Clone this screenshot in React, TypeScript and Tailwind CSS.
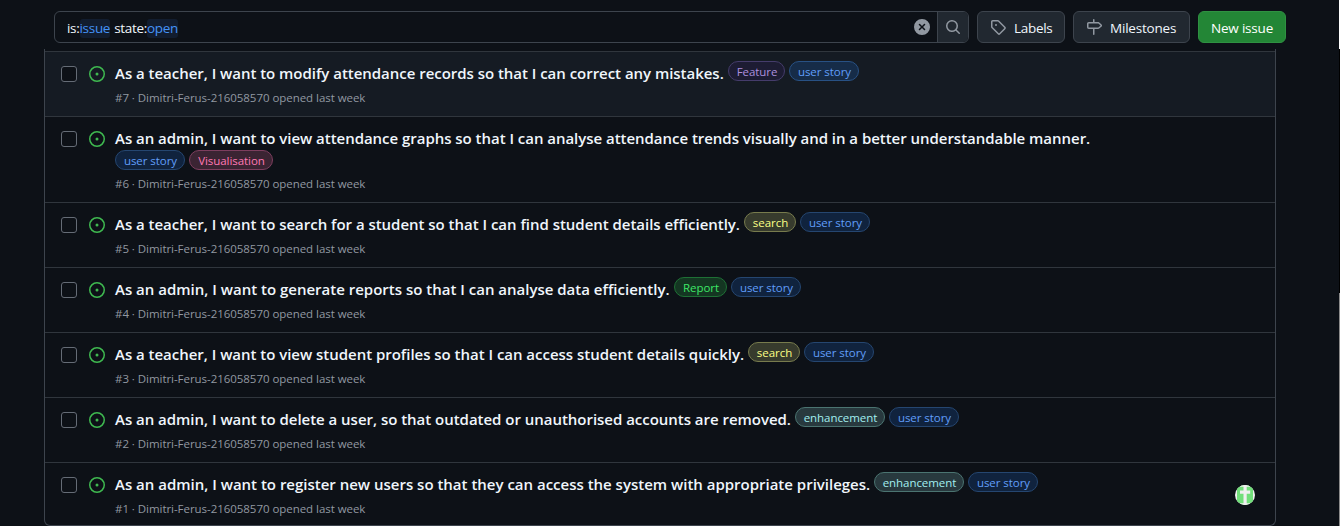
import React from "react";

type Label = { text: string; cls: string };

type Issue = {
  id: number;
  title: string;
  titleCls: string;
  labels: Label[];
  hovered?: boolean;
  wrapped?: boolean;
};

const userStory: Label = { text: "user story", cls: "w-[70px] bg-[#10233e] border-[#254670] text-[#609efa]" };
const search: Label = { text: "search", cls: "w-[52px] bg-[#373b2d] border-[#777b4d] text-[#fbff85]" };
const enhancement: Label = { text: "enhancement", cls: "w-[90px] bg-[#28393e] border-[#4b7471] text-[#a2eeef]" };

const issues: Issue[] = [
  {
    id: 7,
    title: "As a teacher, I want to modify attendance records so that I can correct any mistakes.",
    titleCls: "w-[609px] tracking-[-0.03px]",
    labels: [
      { text: "Feature", cls: "w-[57px] bg-[#1d1c33] border-[#453c6b] text-[#ac8fde]" },
      { text: "user story", cls: "w-[70px] bg-[#162c48] border-[#285184] text-[#609efa]" },
    ],
    hovered: true,
  },
  {
    id: 6,
    title:
      "As an admin, I want to view attendance graphs so that I can analyse attendance trends visually and in a better understandable manner.",
    titleCls: "w-[976px] tracking-[-0.033px]",
    labels: [userStory, { text: "Visualisation", cls: "w-[84px] bg-[#3b2433] border-[#7d3e5e] text-[#ff79b4]" }],
    wrapped: true,
  },
  {
    id: 5,
    title: "As a teacher, I want to search for a student so that I can find student details efficiently.",
    titleCls: "w-[625px] tracking-[-0.025px]",
    labels: [search, userStory],
  },
  {
    id: 4,
    title: "As an admin, I want to generate reports so that I can analyse data efficiently.",
    titleCls: "w-[555px] tracking-[-0.002px]",
    labels: [{ text: "Report", cls: "w-[53px] bg-[#143622] border-[#1e7035] text-[#3ee667]" }, userStory],
  },
  {
    id: 3,
    title: "As a teacher, I want to view student profiles so that I can access student details quickly.",
    titleCls: "w-[629px] tracking-[-0.025px]",
    labels: [search, userStory],
  },
  {
    id: 2,
    title: "As an admin, I want to delete a user, so that outdated or unauthorised accounts are removed.",
    titleCls: "w-[676px] tracking-[-0.025px]",
    labels: [enhancement, userStory],
  },
  {
    id: 1,
    title: "As an admin, I want to register new users so that they can access the system with appropriate privileges.",
    titleCls: "w-[755px] tracking-[-0.006px]",
    labels: [enhancement, userStory],
  },
];

const paths = {
  open: "M8 9.5a1.5 1.5 0 1 0 0-3 1.5 1.5 0 0 0 0 3ZM8 0a8 8 0 1 1 0 16A8 8 0 0 1 8 0ZM1.5 8a6.5 6.5 0 1 0 13 0 6.5 6.5 0 0 0-13 0Z",
  search:
    "M10.68 11.74a6 6 0 0 1-7.922-8.982 6 6 0 0 1 8.982 7.922l3.04 3.04a.749.749 0 0 1-.326 1.275.749.749 0 0 1-.734-.215ZM11.5 7a4.499 4.499 0 1 0-8.997 0A4.499 4.499 0 0 0 11.5 7Z",
  tag: "M1 7.775V2.75C1 1.784 1.784 1 2.75 1h5.025c.464 0 .91.184 1.238.513l6.25 6.25a1.75 1.75 0 0 1 0 2.474l-5.026 5.026a1.75 1.75 0 0 1-2.474 0l-6.25-6.25A1.752 1.752 0 0 1 1 7.775Zm1.5 0c0 .066.026.13.073.177l6.25 6.25a.25.25 0 0 0 .354 0l5.025-5.025a.25.25 0 0 0 0-.354l-6.25-6.25a.25.25 0 0 0-.177-.073H2.75a.25.25 0 0 0-.25.25ZM6 5a1 1 0 1 1 0 2 1 1 0 0 1 0-2Z",
  milestone:
    "M7.75 0a.75.75 0 0 1 .75.75V3h3.634c.414 0 .814.147 1.13.414l2.07 1.75a1.75 1.75 0 0 1 0 2.672l-2.07 1.75a1.75 1.75 0 0 1-1.13.414H8.5v5.25a.75.75 0 0 1-1.5 0V10H2.75A1.75 1.75 0 0 1 1 8.25v-3.5C1 3.784 1.784 3 2.75 3H7V.75A.75.75 0 0 1 7.75 0Zm4.384 8.5a.25.25 0 0 0 .161-.06l2.07-1.75a.248.248 0 0 0 0-.38l-2.07-1.75a.25.25 0 0 0-.161-.06H2.75a.25.25 0 0 0-.25.25v3.5c0 .138.112.25.25.25h9.384Z",
  clear:
    "M2.343 13.657A8 8 0 1 1 13.658 2.343 8 8 0 0 1 2.343 13.657ZM6.03 4.97a.751.751 0 0 0-1.042.018.751.751 0 0 0-.018 1.042L6.94 8 4.97 9.97a.749.749 0 0 0 .326 1.275.749.749 0 0 0 .734-.215L8 9.06l1.97 1.97a.749.749 0 0 0 1.275-.326.749.749 0 0 0-.215-.734L9.06 8l1.97-1.97a.749.749 0 0 0-.326-1.275.749.749 0 0 0-.734.215L8 6.94Z",
};

function Icon({ name, className }: { name: keyof typeof paths; className: string }) {
  return (
    <svg viewBox="0 0 16 16" className={`h-4 w-4 shrink-0 ${className}`} fill="currentColor" aria-hidden="true">
      <path d={paths[name]} />
    </svg>
  );
}

function Pill({ label }: { label: Label }) {
  return (
    <span
      className={`flex h-5 shrink-0 items-center justify-center rounded-full border pt-[2px] pl-px text-[11.5px] leading-[18px] tracking-[-0.05px] whitespace-nowrap ${label.cls}`}
    >
      {label.text}
    </span>
  );
}

function IssueRow({ issue }: { issue: Issue }) {
  return (
    <li
      className={`flex shrink-0 border-t border-[#30363d] pl-4 ${issue.wrapped ? "h-[86px]" : "h-[65px]"} ${
        issue.hovered ? "bg-[#151b23]" : ""
      }`}
    >
      <span className="mt-[14px] h-4 w-4 shrink-0 rounded-[3px] border border-[#656c76] bg-[#0d1117]" />
      <Icon name="open" className="mt-[14px] ml-3 text-[#3fb950]" />
      <div className="ml-[10px] flex flex-col">
        <div className={issue.wrapped ? "flex h-[52px] flex-col pt-[9px]" : "flex h-[35px] gap-1 pt-[9px]"}>
          <h3
            className={`h-6 shrink-0 text-[15px] leading-6 font-semibold whitespace-nowrap text-[#f0f6fc] ${issue.titleCls}`}
          >
            {issue.title}
          </h3>
          <div className="flex gap-1">
            {issue.labels.map((l) => (
              <Pill key={l.text} label={l} />
            ))}
          </div>
        </div>
        <p
          className={`text-[11.5px] leading-[18px] tracking-[-0.045px] whitespace-nowrap text-[#9198a1] ${
            issue.wrapped ? "mt-[6px]" : "mt-[2px]"
          }`}
        >
          #{issue.id} · Dimitri-Ferus-216058570 opened last week
        </p>
      </div>
      {issue.id === 1 && (
        <svg viewBox="0 0 20 20" className="mt-[22px] mr-5 ml-auto h-5 w-5 shrink-0" aria-hidden="true">
          <clipPath id="avatar">
            <circle cx="10" cy="10" r="10" />
          </clipPath>
          <g clipPath="url(#avatar)">
            <rect width="20" height="20" fill="#f0f0f0" />
            <rect x="2" width="16" height="20" fill="#72df7b" />
            <path d="M8.5 0h3.2v20H8.5zM5 5.5h10.2v3.2H5z" fill="#f0f0f0" />
            <path d="M5 0h10v1.8H5zM5 18.2h10V20H5z" fill="#f0f0f0" />
          </g>
        </svg>
      )}
    </li>
  );
}

export default function App() {
  return (
    <div className="flex h-[526px] w-[1340px] overflow-hidden bg-[#0d1117] font-['Open_Sans','Noto_Sans',sans-serif]">
      <main className="flex w-[1339px] flex-col">
        <header className="flex h-[49px] shrink-0 gap-2 pt-[11px] pl-[54px]">
          <div className="flex h-8 w-[915px] overflow-hidden rounded-md border border-[#3d444d]">
            <div className="flex flex-1 items-center pt-[2px] pl-3 text-[13.5px] leading-[19px] tracking-[-0.3px] text-[#f0f6fc]">
              <span>is:</span>
              <span className="rounded-[3px] bg-[#121d2f] text-[#4493f8]">issue</span>
              <span className="ml-1">state:</span>
              <span className="rounded-[3px] bg-[#121d2f] text-[#4493f8]">open</span>
            </div>
            <Icon name="clear" className="mt-[7px] mr-[7px] text-[#9198a1]" />
            <button className="flex w-[31px] items-center justify-center border-l border-[#3d444d] bg-[#212830]">
              <Icon name="search" className="text-[#9198a1]" />
            </button>
          </div>
          <button className="flex h-8 w-[88px] items-center rounded-md border border-[#3d444d] bg-[#212830] pl-3 text-[13.5px] tracking-[-0.3px] text-[#f0f6fc]">
            <Icon name="tag" className="mr-2 text-[#9198a1]" />
            <span className="pt-[2px]">Labels</span>
          </button>
          <button className="flex h-8 w-[117px] items-center rounded-md border border-[#3d444d] bg-[#212830] pl-3 text-[13.5px] tracking-[-0.2px] text-[#f0f6fc]">
            <Icon name="milestone" className="mr-2 text-[#9198a1]" />
            <span className="pt-[2px]">Milestones</span>
          </button>
          <button className="flex h-8 w-[88px] items-center justify-center rounded-md border border-[#2f9142] bg-[#238636] pt-[2px] text-[13.5px] tracking-[-0.2px] text-white">
            New issue
          </button>
        </header>
        <ul className="ml-11 flex h-[477px] w-[1232px] flex-col rounded-b-md border-x border-b border-[#3d444d] pt-[2px]">
          {issues.map((i) => (
            <IssueRow key={i.id} issue={i} />
          ))}
        </ul>
      </main>
      <div className="flex w-px flex-col">
        <div className="h-[49px] bg-white" />
        <div className="h-[244px] bg-black" />
        <div className="flex-1 bg-[#8b8b8b]" />
      </div>
    </div>
  );
}
